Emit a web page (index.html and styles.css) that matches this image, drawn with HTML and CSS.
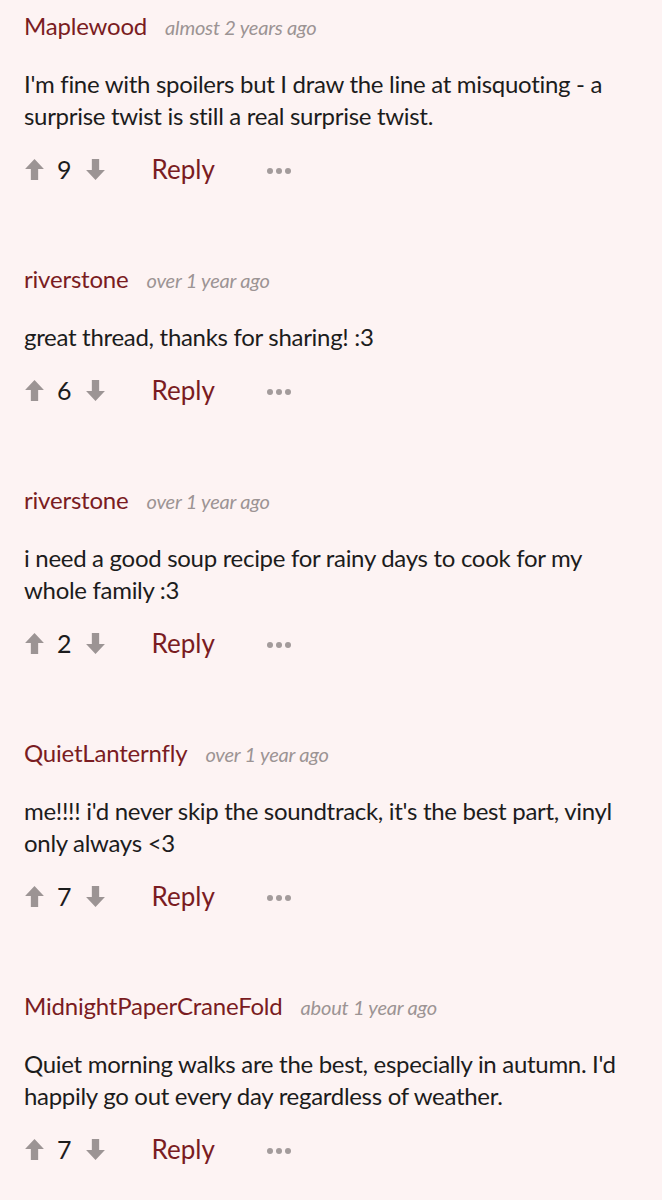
FILE: index.html
```html
<!DOCTYPE html>
<html lang="en">
<head>
    <meta charset="UTF-8">
    <meta name="viewport" content="width=device-width, initial-scale=1.0">
    <title>Comments</title>
    <link rel="stylesheet" href="styles.css">
</head>
<body>
    <div class="comments">
        <div class="comment">
            <div class="comment-head">
                <span class="author">Maplewood</span>
                <span class="time">almost 2 years ago</span>
            </div>
            <p class="comment-body">I'm fine with spoilers but I draw the line at misquoting - a surprise twist is still a real surprise twist.</p>
            <div class="actions">
                <svg class="vote" viewBox="0 0 20 22"><path d="M10 1 L19 10.5 L13.5 10.5 L13.5 21 L6.5 21 L6.5 10.5 L1 10.5 Z"/></svg>
                <span class="score">9</span>
                <svg class="vote" viewBox="0 0 20 22"><path d="M10 21 L19 11.5 L13.5 11.5 L13.5 1 L6.5 1 L6.5 11.5 L1 11.5 Z"/></svg>
                <a class="reply" href="#">Reply</a>
                <span class="more"><i></i><i></i><i></i></span>
            </div>
        </div>

        <div class="comment">
            <div class="comment-head">
                <span class="author">riverstone</span>
                <span class="time">over 1 year ago</span>
            </div>
            <p class="comment-body">great thread, thanks for sharing! :3</p>
            <div class="actions">
                <svg class="vote" viewBox="0 0 20 22"><path d="M10 1 L19 10.5 L13.5 10.5 L13.5 21 L6.5 21 L6.5 10.5 L1 10.5 Z"/></svg>
                <span class="score">6</span>
                <svg class="vote" viewBox="0 0 20 22"><path d="M10 21 L19 11.5 L13.5 11.5 L13.5 1 L6.5 1 L6.5 11.5 L1 11.5 Z"/></svg>
                <a class="reply" href="#">Reply</a>
                <span class="more"><i></i><i></i><i></i></span>
            </div>
        </div>

        <div class="comment">
            <div class="comment-head">
                <span class="author">riverstone</span>
                <span class="time">over 1 year ago</span>
            </div>
            <p class="comment-body">i need a good soup recipe for rainy days to cook for my whole family :3</p>
            <div class="actions">
                <svg class="vote" viewBox="0 0 20 22"><path d="M10 1 L19 10.5 L13.5 10.5 L13.5 21 L6.5 21 L6.5 10.5 L1 10.5 Z"/></svg>
                <span class="score">2</span>
                <svg class="vote" viewBox="0 0 20 22"><path d="M10 21 L19 11.5 L13.5 11.5 L13.5 1 L6.5 1 L6.5 11.5 L1 11.5 Z"/></svg>
                <a class="reply" href="#">Reply</a>
                <span class="more"><i></i><i></i><i></i></span>
            </div>
        </div>

        <div class="comment">
            <div class="comment-head">
                <span class="author">QuietLanternfly</span>
                <span class="time">over 1 year ago</span>
            </div>
            <p class="comment-body">me!!!! i'd never skip the soundtrack, it's the best part, vinyl only always &lt;3</p>
            <div class="actions">
                <svg class="vote" viewBox="0 0 20 22"><path d="M10 1 L19 10.5 L13.5 10.5 L13.5 21 L6.5 21 L6.5 10.5 L1 10.5 Z"/></svg>
                <span class="score">7</span>
                <svg class="vote" viewBox="0 0 20 22"><path d="M10 21 L19 11.5 L13.5 11.5 L13.5 1 L6.5 1 L6.5 11.5 L1 11.5 Z"/></svg>
                <a class="reply" href="#">Reply</a>
                <span class="more"><i></i><i></i><i></i></span>
            </div>
        </div>

        <div class="comment">
            <div class="comment-head">
                <span class="author">MidnightPaperCraneFold</span>
                <span class="time">about 1 year ago</span>
            </div>
            <p class="comment-body">Quiet morning walks are the best, especially in autumn. I'd happily go out every day regardless of weather.</p>
            <div class="actions">
                <svg class="vote" viewBox="0 0 20 22"><path d="M10 1 L19 10.5 L13.5 10.5 L13.5 21 L6.5 21 L6.5 10.5 L1 10.5 Z"/></svg>
                <span class="score">7</span>
                <svg class="vote" viewBox="0 0 20 22"><path d="M10 21 L19 11.5 L13.5 11.5 L13.5 1 L6.5 1 L6.5 11.5 L1 11.5 Z"/></svg>
                <a class="reply" href="#">Reply</a>
                <span class="more"><i></i><i></i><i></i></span>
            </div>
        </div>
    </div>
</body>
</html>
```

FILE: styles.css
```css
body {
    font-family: Lato, "Open Sans", sans-serif;
    background-color: #fdf3f3;
    margin: 0;
    padding: 0;
    color: #1c1c1c;
}
.comments {
    padding: 10px 24px 0 24px;
}
.comment {
    margin-bottom: 74px;
}
.comment-head {
    display: flex;
    align-items: baseline;
    gap: 18px;
    height: 32px;
    line-height: 32px;
}
.author {
    font-size: 24px;
    color: #7a1c22;
    letter-spacing: -0.2px;
}
.time {
    font-size: 20px;
    font-style: italic;
    color: #9c9494;
    letter-spacing: -0.2px;
}
.comment-body {
    margin: 26px 0 0 0;
    font-size: 24px;
    line-height: 32px;
    letter-spacing: -0.3px;
}
.actions {
    display: flex;
    align-items: center;
    height: 40px;
    margin-top: 17px;
}
.vote {
    width: 21px;
    height: 23px;
    fill: #9c9494;
}
.score {
    font-size: 25px;
    color: #1c1c1c;
    margin: 0 13px 0 12px;
}
.reply {
    font-size: 26px;
    color: #7a1c22;
    text-decoration: none;
    margin-left: 46px;
}
.more {
    display: flex;
    gap: 3px;
    margin-left: 52px;
    margin-top: 4px;
}
.more i {
    display: block;
    width: 6px;
    height: 6px;
    border-radius: 50%;
    background-color: #a39b9b;
}
```
